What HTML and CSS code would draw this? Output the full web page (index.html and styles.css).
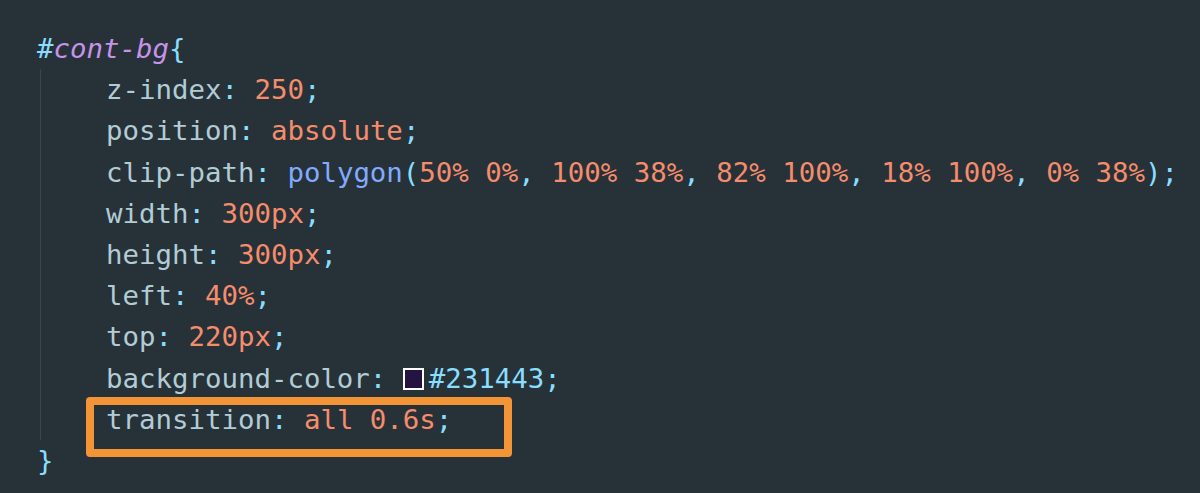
FILE: index.html
```html
<!DOCTYPE html>
<html lang="en">
<head>
<meta charset="utf-8">
<title>cont-bg</title>
<link rel="stylesheet" href="styles.css">
</head>
<body>
<div class="editor">
  <div class="line"><span class="pu">#</span><span class="sel">cont-bg</span><span class="pu">{</span></div>
  <div class="block">
    <div class="line"><span class="prop">z-index</span><span class="pu">:</span> <span class="val">250</span><span class="pu">;</span></div>
    <div class="line"><span class="prop">position</span><span class="pu">:</span> <span class="val">absolute</span><span class="pu">;</span></div>
    <div class="line"><span class="prop">clip-path</span><span class="pu">:</span> <span class="fn">polygon</span><span class="pu">(</span><span class="val">50% 0%</span><span class="pu">,</span> <span class="val">100% 38%</span><span class="pu">,</span> <span class="val">82% 100%</span><span class="pu">,</span> <span class="val">18% 100%</span><span class="pu">,</span> <span class="val">0% 38%</span><span class="pu">);</span></div>
    <div class="line"><span class="prop">width</span><span class="pu">:</span> <span class="val">300px</span><span class="pu">;</span></div>
    <div class="line"><span class="prop">height</span><span class="pu">:</span> <span class="val">300px</span><span class="pu">;</span></div>
    <div class="line"><span class="prop">left</span><span class="pu">:</span> <span class="val">40%</span><span class="pu">;</span></div>
    <div class="line"><span class="prop">top</span><span class="pu">:</span> <span class="val">220px</span><span class="pu">;</span></div>
    <div class="line"><span class="prop">background-color</span><span class="pu">:</span> <span class="swatch"></span><span class="pu">#231443;</span></div>
    <div class="line marked"><span class="prop">transition</span><span class="pu">:</span> <span class="val">all 0.6s</span><span class="pu">;</span><span class="highlight"></span></div>
  </div>
  <div class="line"><span class="pu">}</span></div>
</div>
</body>
</html>
```

FILE: styles.css
```css
html, body {
  margin: 0;
  padding: 0;
  background: #263238;
}

.editor {
  padding: 28px 0 0 37px;
  font-family: "DejaVu Sans Mono", "Liberation Mono", monospace;
  font-size: 27.4px;
  line-height: 41.2px;
  color: #b2ccd6;
}

.block {
  margin-left: 3px;
  padding-left: 65px;
  border-left: 1px solid #37474f;
}

.line {
  height: 41.2px;
  white-space: pre;
}

.marked {
  position: relative;
}

.pu { color: #89ddff; }
.sel { color: #c792ea; font-style: italic; }
.prop { color: #b2ccd6; }
.val { color: #f78c6c; }
.fn { color: #82aaff; }

.swatch {
  display: inline-block;
  width: 17px;
  height: 18px;
  border: 2px solid #ffffff;
  background: #231443;
  vertical-align: -2px;
  margin-right: 5px;
}

.highlight {
  position: absolute;
  left: -20px;
  top: -2px;
  width: 410px;
  height: 44px;
  border: 8px solid #f39536;
  border-radius: 4px;
}
```
